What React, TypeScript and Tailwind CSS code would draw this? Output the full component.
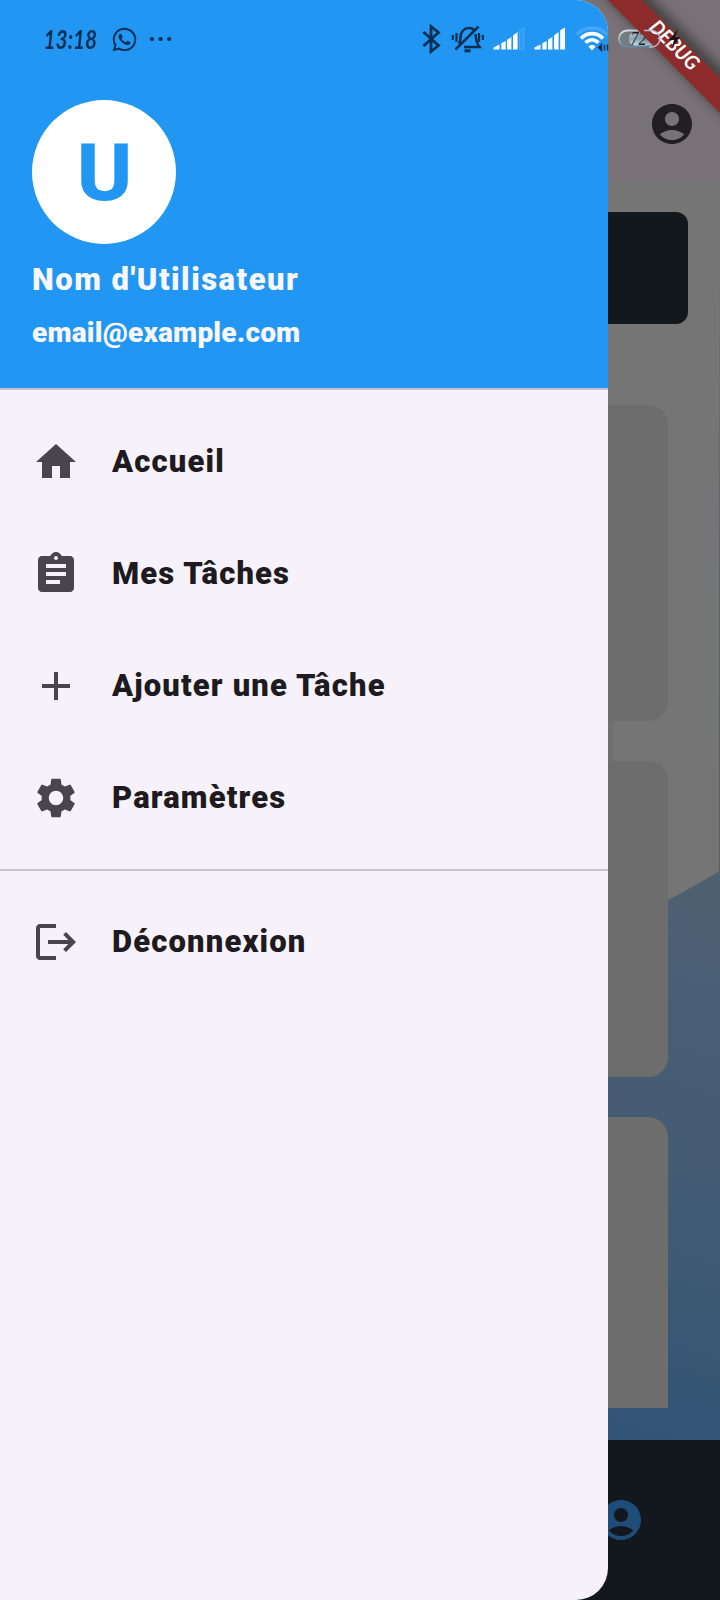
import type { ReactNode } from "react";
import { MdAdd, MdAssignment, MdHome, MdLogout, MdSettings } from "react-icons/md";
import { FaWhatsapp } from "react-icons/fa";

function AccountCircle({ className }: { className: string }) {
  return (
    <svg viewBox="0 0 24 24" className={className} fill="currentColor">
      <path d="M12 2C6.48 2 2 6.48 2 12s4.48 10 10 10 10-4.48 10-10S17.52 2 12 2zm0 4c1.93 0 3.5 1.57 3.5 3.5S13.93 13 12 13s-3.5-1.57-3.5-3.5S10.07 6 12 6zm0 14c-2.03 0-4.43-.82-6.14-2.88C7.55 15.8 9.68 15 12 15s4.45.8 6.14 2.12C16.43 19.18 14.03 20 12 20z" />
    </svg>
  );
}

function Signal({ weak = false }: { weak?: boolean }) {
  return (
    <svg viewBox="0 0 32 24" className="h-6 w-8 shrink-0" fill="#fff">
      <path d="M0.5 20.5 6.5 17.5V22.5H0.5zM8.3 16.2 12.7 14V22.5H8.3zM14 12.8 18.4 10V22.5H14zM20 8.4 24.6 5V22.5H20z" />
      {weak ? (
        <path d="M26.5 3.2 31 .8V22.5H26.5z" fill="#5cb2f8" fillOpacity=".2" stroke="#7cc0f9" strokeOpacity=".4" />
      ) : (
        <path d="M26.2 3.2 31 .5V22.5H26.2z" />
      )}
    </svg>
  );
}

function StatusBar() {
  return (
    <div className="absolute inset-x-0 top-0 flex h-[78px] items-center pl-[42px] text-[#0b2f52]">
      <span className="w-[60px] origin-left scale-x-[0.77] pl-0.5 font-['Lato'] text-[27px] leading-[36px] font-bold whitespace-nowrap italic">13:18</span>
      <FaWhatsapp className="ml-[9px] size-[27px] shrink-0" />
      <svg viewBox="0 0 24 6" className="ml-[11px] h-1.5 w-6 shrink-0" fill="currentColor">
        <circle cx="3" cy="3" r="2.1" />
        <circle cx="11.6" cy="3" r="2.1" />
        <circle cx="20.2" cy="3" r="2.1" />
      </svg>
      <svg viewBox="0 0 20 30" className="ml-[249px] h-[30px] w-5 shrink-0" fill="none" stroke="currentColor" strokeWidth="2.8">
        <path d="M1.5 8 16.5 21.5 9 27.5V2.5L16.5 8.5 1.5 22" />
      </svg>
      <svg viewBox="0 0 34 30" className="ml-[9px] h-[30px] w-[34px] shrink-0" fill="none" stroke="currentColor" strokeWidth="2.5">
        <path d="M8 20C10 17 9 13 10 10c1-3 4-6 8-6 2 0 4 .8 5 2M24.5 10c.5 4 0 8 4 13H13M27.5 2.5 4.5 25.5" />
        <path d="M13.5 26.8h6" strokeWidth="3" />
        <path d="M5.5 9v9M1.8 11v5M28 9v9M31.8 11v5" strokeWidth="2.2" />
      </svg>
      <span className="ml-[8px] flex gap-[9px]">
        <Signal weak />
        <Signal />
      </span>
      <svg viewBox="0 0 34 28" className="ml-[9px] h-7 w-[34px] shrink-0" fill="none" stroke="#fff">
        <path d="M2 9.5C10 1 24 1 32 9.5" stroke="#86c5f9" strokeOpacity=".35" strokeWidth="3.6" />
        <path d="M6 13.5C12 7 22 7 28 13.5" strokeWidth="3.6" />
        <path d="M10.5 17.8c4-4 9-4 13 0" strokeWidth="3.6" />
        <path d="m17 25-3-3.500q3-2.500 6 0z" fill="#fff" />
        <path d="m23.500 22.500 3-3v6zM29.500 20v5.500M32.500 19.500v6" fill="#0b2f52" stroke="#0b2f52" strokeWidth="1.400" />
      </svg>
      <svg viewBox="0 0 46 34" className="ml-[8px] h-[34px] w-[46px] shrink-0">
        <defs>
          <linearGradient id="battery" x1="0" y1="0" x2="0" y2="1">
            <stop offset="0" stopColor="#c4d2da" />
            <stop offset=".5" stopColor="#8aa9b9" />
            <stop offset="1" stopColor="#c5dbe5" />
          </linearGradient>
          <linearGradient id="ring" x1="0" y1="0" x2="0" y2="1">
            <stop offset="0" stopColor="#e1e1ea" />
            <stop offset="1" stopColor="#63859a" />
          </linearGradient>
        </defs>
        <rect x="2" y="8.500" width="41" height="16.500" rx="8.250" fill="#777b80" stroke="url(#ring)" strokeWidth="1.800" />
        <rect x="12" y="10" width="29" height="13.500" rx="6" fill="url(#battery)" />
        <text x="13.500" y="22.500" textLength="16" lengthAdjust="spacingAndGlyphs" fill="#20242a" className="font-['Liberation_Serif'] text-[18px] italic">
          72
        </text>
      </svg>
    </div>
  );
}

function DebugBanner() {
  return (
    <>
      <svg viewBox="0 0 160 160" className="absolute top-0 right-0 size-40">
        <defs>
          <filter id="bannerShadow" x="-30%" y="-30%" width="160%" height="160%">
            <feGaussianBlur stdDeviation="6" />
          </filter>
          <clipPath id="outsideDrawer">
            <path d="M16 0A32 32 0 0 1 48 32V160H160V0z" />
          </clipPath>
        </defs>
        <g clipPath="url(#outsideDrawer)">
          <path d="M38-10 170 122V76L84-10z" fill="#000" opacity=".4" filter="url(#bannerShadow)" />
          <path d="M48 0H82L160 78V113z" fill="#8d2a2c" />
        </g>
        <text x="0" y="0" transform="translate(114.500 45) rotate(45)" dy="7" textAnchor="middle" textLength="61" lengthAdjust="spacingAndGlyphs" fill="#fff" className="font-['Lato'] text-[20px] font-bold italic">
          DEBUG
        </text>
      </svg>
      <svg viewBox="0 0 66 34" className="absolute top-[22px] left-[617px] h-[34px] w-[66px]">
        <path d="M27 8.500h7.700a8.200 8.200 0 0 1 0 16.500H32" fill="none" stroke="#b9bcc6" strokeWidth="1.500" />
        <path d="M61 7 52 18h5l-2 8 8-11h-5z" fill="#171316" />
      </svg>
    </>
  );
}

function Backdrop() {
  return (
    <svg viewBox="0 0 720 1260" className="absolute inset-0 h-full w-full">
      <defs>
        <linearGradient id="wave" gradientUnits="userSpaceOnUse" x1="720" y1="690" x2="560" y2="1260">
          <stop offset="0" stopColor="#50606e" />
          <stop offset=".18" stopColor="#4b5f76" />
          <stop offset=".5" stopColor="#435b73" />
          <stop offset=".7" stopColor="#3c5973" />
          <stop offset="1" stopColor="#305377" />
        </linearGradient>
        <linearGradient id="edge" x1="0" y1="0" x2="0" y2="1">
          <stop offset="0" stopColor="#5c636c" stopOpacity="0" />
          <stop offset=".5" stopColor="#59636c" />
          <stop offset="1" stopColor="#50606e" />
        </linearGradient>
      </defs>
      <path d="M608 540h6q-1 20-1 41h-5z" fill="#707070" />
      <path d="M560 769Q650 733 719 691.500H720V1260H560z" fill="url(#wave)" />
      <rect x="719" y="80" width="1" height="612" fill="url(#edge)" />
    </svg>
  );
}

function DimmedPage() {
  return (
    <div className="flex h-full flex-col bg-[#757575]">
      <header className="flex h-[180px] shrink-0 items-end justify-end bg-[#787175] pr-6 pb-8 text-[#211f24]">
        <AccountCircle className="size-12" />
      </header>
      <main className="relative flex h-[1260px] shrink-0 flex-col overflow-hidden">
        <Backdrop />
        <div className="relative mx-8 mt-8 h-28 shrink-0 rounded-xl bg-[#12181b]" />
        <div className="relative mx-[52px] mt-[81px] mb-8 flex flex-1 flex-col gap-10 overflow-hidden">
          <div className="h-[316px] shrink-0 rounded-[20px] bg-[#6d6d6d]" />
          <div className="h-[316px] shrink-0 rounded-[20px] bg-[#6d6d6d]" />
          <div className="h-[316px] shrink-0 rounded-[20px] bg-[#6d6d6d]" />
        </div>
      </main>
      <footer className="flex h-40 shrink-0 items-center justify-end bg-[#12181b] pr-[75px] text-[#1f4d79]">
        <AccountCircle className="size-12" />
      </footer>
    </div>
  );
}

function MenuItem({ icon, label }: { icon: ReactNode; label: string }) {
  return (
    <a className="flex h-28 items-center gap-8 pl-8">
      <span className="text-[48px] text-[#49454e]">{icon}</span>
      <span className="pb-0.5 text-[31px] leading-none font-black tracking-[1.15px] text-[#1d1b20]">{label}</span>
    </a>
  );
}

function Drawer() {
  return (
    <aside className="absolute inset-y-0 left-0 flex w-[608px] flex-col overflow-hidden rounded-r-[32px] bg-[#f7f2fa]">
      <div className="flex h-[390px] shrink-0 flex-col items-start border-b-2 border-[#c3c0d3] bg-[#2196f3] pt-[100px] pl-8 font-black text-[#f8f6ff]">
        <div className="flex size-36 items-center justify-center rounded-full bg-white pt-0.5 text-[80px] leading-none font-extrabold text-[#2196f3]">
          <span className="scale-x-105">U</span>
        </div>
        <div className="mt-[16px] text-[31px] leading-[40px] tracking-[1.5px]">Nom d'Utilisateur</div>
        <div className="mt-[13px] text-[28px] leading-[40px] tracking-[0.2px]">email@example.com</div>
      </div>
      <nav className="flex flex-col pt-4">
        <MenuItem icon={<MdHome />} label="Accueil" />
        <MenuItem icon={<MdAssignment />} label="Mes Tâches" />
        <MenuItem icon={<MdAdd />} label="Ajouter une Tâche" />
        <MenuItem icon={<MdSettings />} label="Paramètres" />
        <div className="my-[15px] h-0.5 bg-[#c9c4ce]" />
        <MenuItem icon={<MdLogout />} label="Déconnexion" />
      </nav>
    </aside>
  );
}

export default function App() {
  return (
    <div className="relative h-[1600px] w-[720px] overflow-hidden font-['Roboto',sans-serif]">
      <DimmedPage />
      <Drawer />
      <StatusBar />
      <DebugBanner />
    </div>
  );
}
